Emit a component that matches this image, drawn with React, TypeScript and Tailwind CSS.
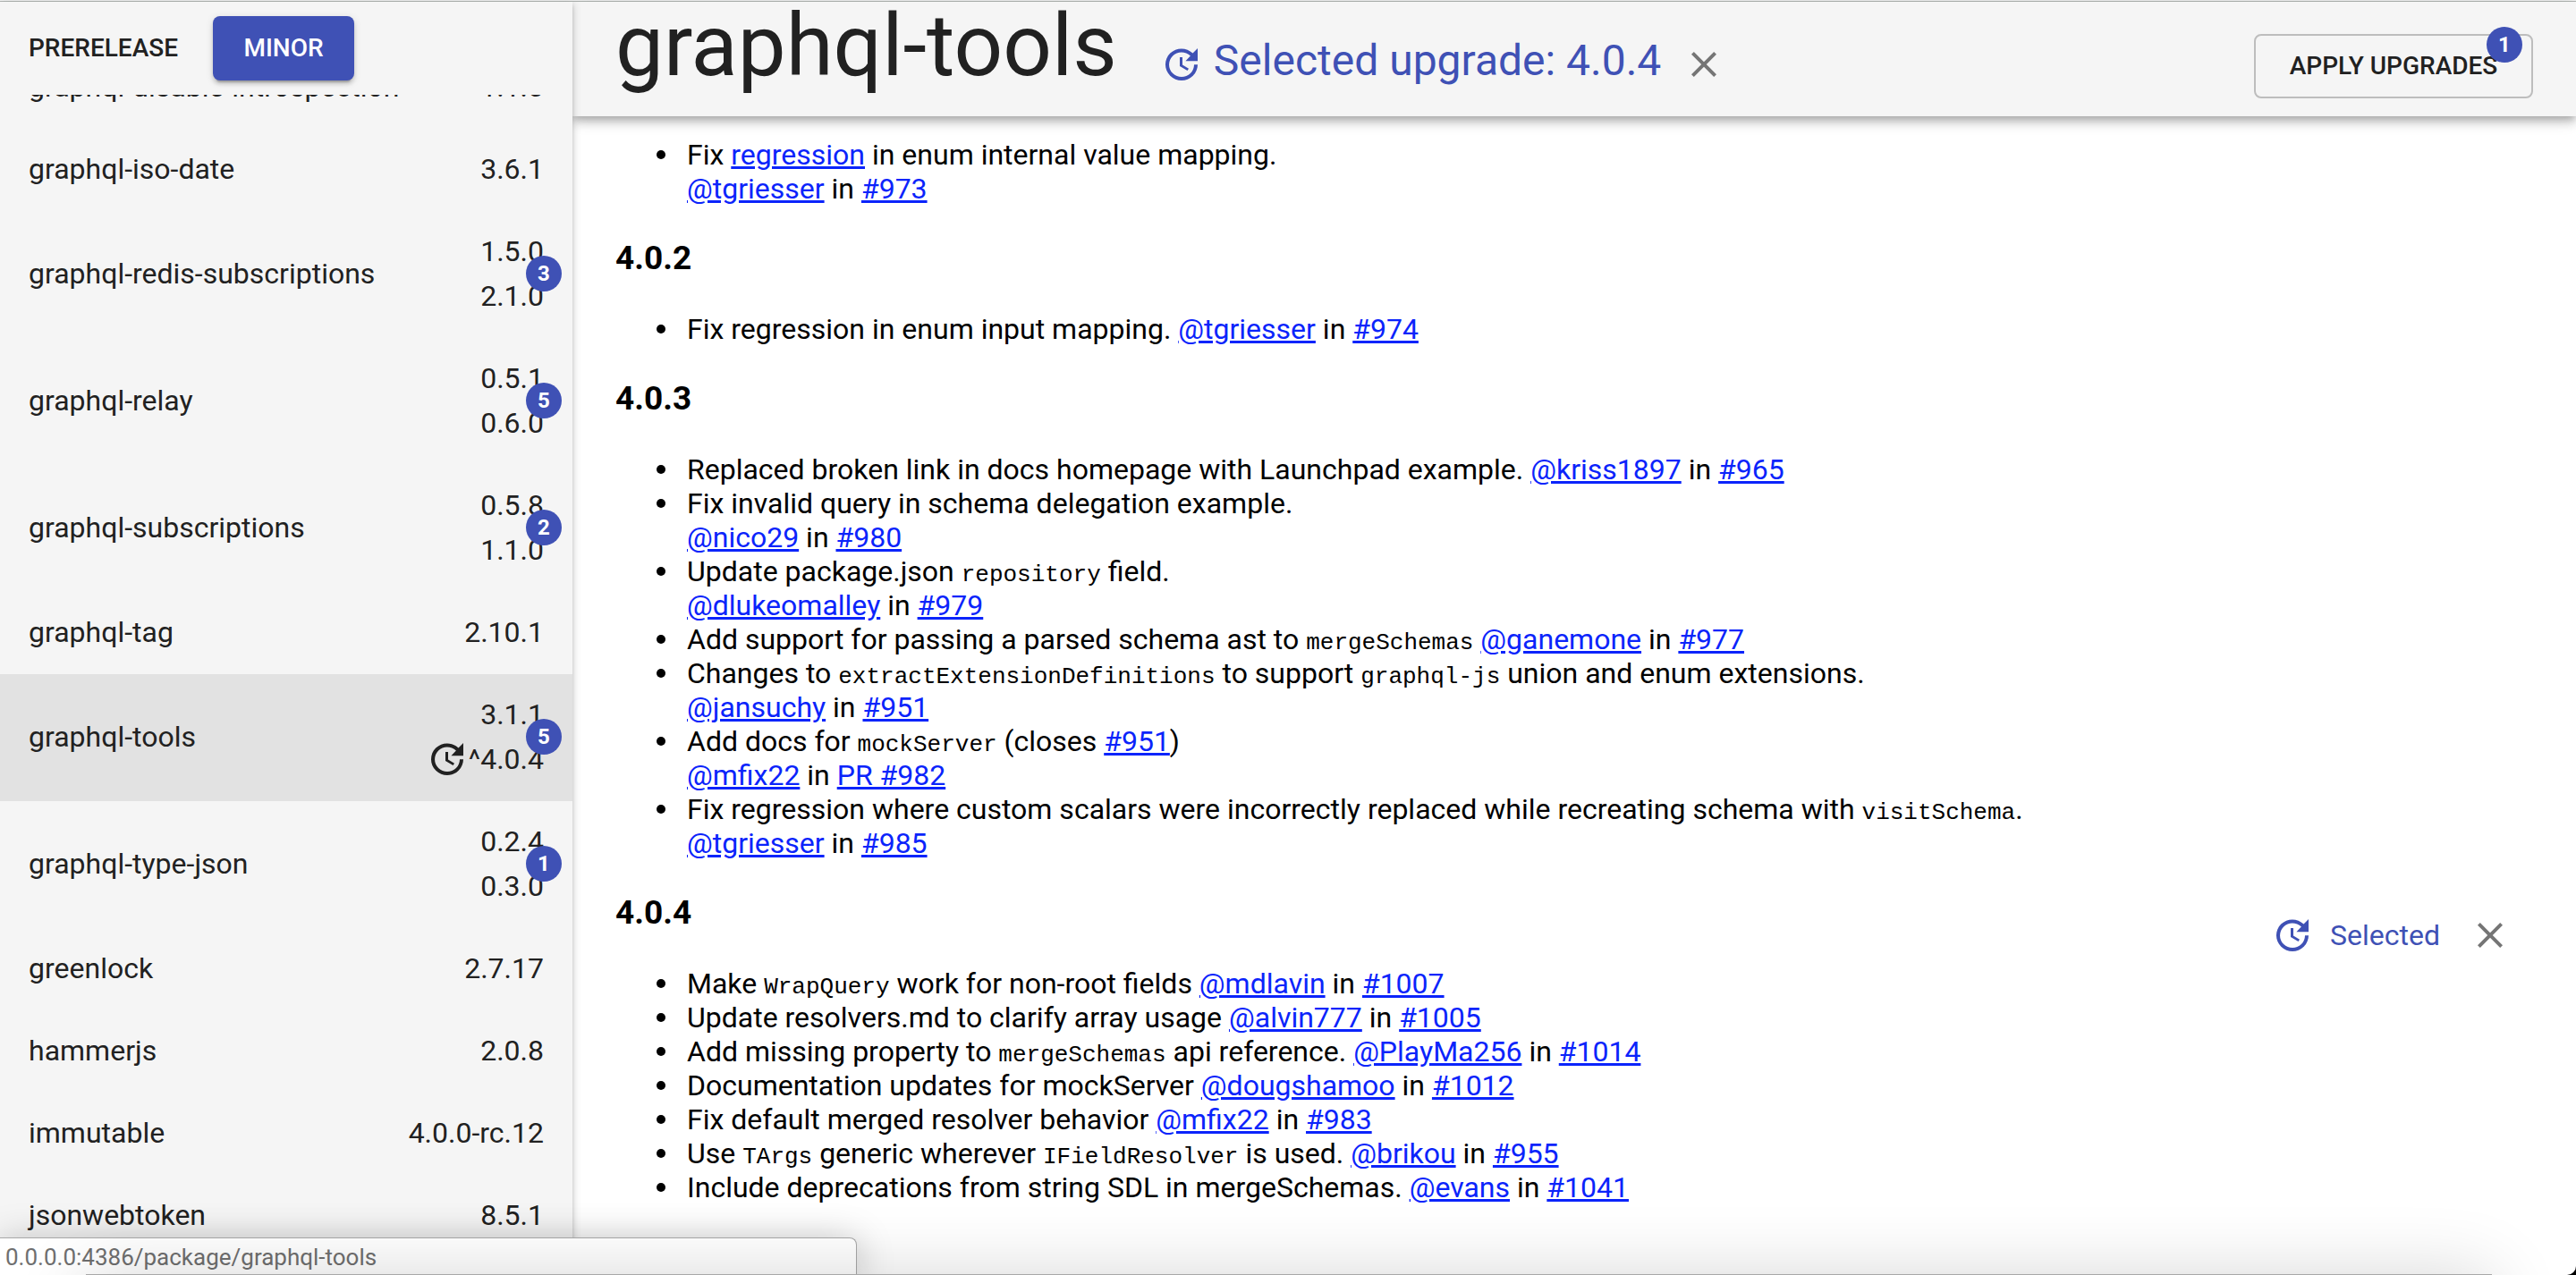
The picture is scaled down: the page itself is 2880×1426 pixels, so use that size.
import { useState } from "react";
import type { ReactNode } from "react";

type Pkg = {
  name: string;
  current: string;
  latest?: string;
  count?: number;
  selected?: boolean;
};

const packages: Pkg[] = [
  { name: "graphql-disable-introspection", current: "1.1.0" },
  { name: "graphql-iso-date", current: "3.6.1" },
  { name: "graphql-redis-subscriptions", current: "1.5.0", latest: "2.1.0", count: 3 },
  { name: "graphql-relay", current: "0.5.1", latest: "0.6.0", count: 5 },
  { name: "graphql-subscriptions", current: "0.5.8", latest: "1.1.0", count: 2 },
  { name: "graphql-tag", current: "2.10.1" },
  { name: "graphql-tools", current: "3.1.1", latest: "^4.0.4", count: 5, selected: true },
  { name: "graphql-type-json", current: "0.2.4", latest: "0.3.0", count: 1 },
  { name: "greenlock", current: "2.7.17" },
  { name: "hammerjs", current: "2.0.8" },
  { name: "immutable", current: "4.0.0-rc.12" },
  { name: "jsonwebtoken", current: "8.5.1" },
];

function UpdateIcon() {
  return (
    <svg viewBox="0 0 24 24" className="size-12 shrink-0 fill-current" aria-hidden="true">
      <path d="M21 10.12h-6.78l2.74-2.82c-2.73-2.7-7.15-2.8-9.88-.1-2.73 2.71-2.73 7.08 0 9.79 2.73 2.71 7.15 2.71 9.88 0C18.32 15.65 19 14.08 19 12.1h2c0 1.98-.88 4.55-2.64 6.29-3.51 3.48-9.21 3.48-12.72 0-3.5-3.47-3.53-9.11-.02-12.58 3.51-3.47 9.14-3.47 12.65 0L21 3v7.12zM12.5 8v4.25l3.5 2.08-.72 1.21L11 13V8h1.5z" />
    </svg>
  );
}

function CloseButton({ label }: { label: string }) {
  return (
    <button type="button" aria-label={label} className="rounded-full p-6 text-[#757575]">
      <svg viewBox="0 0 24 24" className="size-12 fill-current" aria-hidden="true">
        <path d="M19 6.41L17.59 5 12 10.59 6.41 5 5 6.41 10.59 12 5 17.59 6.41 19 12 13.41 17.59 19 19 17.59 13.41 12z" />
      </svg>
    </button>
  );
}

function Badge({ children }: { children: ReactNode }) {
  return (
    <span className="absolute flex size-10 items-center justify-center rounded-full bg-[#3f51b5] text-2xl font-bold text-white">
      {children}
    </span>
  );
}

function PackageRow({ pkg }: { pkg: Pkg }) {
  return (
    <li>
      <a
        href={"#" + pkg.name}
        aria-current={pkg.selected ? "page" : undefined}
        className={
          "flex items-center justify-between px-8 pt-5 pb-[22px] text-[32px] leading-[50px] " +
          (pkg.selected ? "bg-[#e2e2e2]" : "")
        }
      >
        <span>{pkg.name}</span>
        <span className="relative flex flex-col items-end">
          <span>{pkg.current}</span>
          {pkg.latest && (
            <span className="flex items-center">
              {pkg.selected && <UpdateIcon />}
              {pkg.latest}
            </span>
          )}
          {pkg.count && (
            <span className="absolute top-1/2 right-0 flex items-center justify-center">
              <Badge>{pkg.count}</Badge>
            </span>
          )}
        </span>
      </a>
    </li>
  );
}

function A({ children }: { children: ReactNode }) {
  return (
    <a href="#changelog" className="text-[#0b24fb] underline">
      {children}
    </a>
  );
}

function Code({ children }: { children: ReactNode }) {
  return <code className="font-['Liberation_Mono',monospace] text-[26px] leading-none">{children}</code>;
}

function Notes({ children }: { children: ReactNode }) {
  return <ul className="pl-20 text-[32px] leading-[38px]">{children}</ul>;
}

function Note({ children }: { children: ReactNode }) {
  return (
    <li className="relative before:absolute before:top-3.5 before:-left-[34px] before:size-2.5 before:rounded-full before:bg-black">
      {children}
    </li>
  );
}

function Release({ version, children }: { version: string; children: ReactNode }) {
  return (
    <section className="mt-[37px] grow">
      <h3 className="mb-[38px] text-[37px] leading-[44px] font-bold">{version}</h3>
      <Notes>{children}</Notes>
    </section>
  );
}

export default function App() {
  const [channel, setChannel] = useState("minor");
  const active =
    "bg-[#3f51b5] text-white shadow-[0_6px_2px_-4px_rgba(0,0,0,0.2),0_4px_4px_rgba(0,0,0,0.14),0_2px_10px_rgba(0,0,0,0.12)]";

  return (
    <div className="bg-black">
      <div className="relative flex h-screen flex-col overflow-hidden rounded-br-[10px] bg-white font-[Roboto,sans-serif] text-[#212121]">
        <div className="h-0.5 shrink-0 border-b border-[#b3b8b5] bg-[#f5f5f5]" />
        <div className="flex min-h-0 grow">
          <aside className="z-20 flex w-[640px] shrink-0 flex-col bg-[#f5f5f5] shadow-[0_2px_10px_rgba(0,0,0,0.2),0_4px_4px_rgba(0,0,0,0.14)]">
            <div className="flex py-4 text-[28px] leading-[48px] font-medium">
              <button
                type="button"
                onClick={() => setChannel("prerelease")}
                className={"w-[238px] rounded-lg px-8 py-3 text-left " + (channel === "prerelease" ? active : "")}
              >
                PRERELEASE
              </button>
              <button
                type="button"
                onClick={() => setChannel("minor")}
                className={"w-[158px] rounded-lg py-3 " + (channel === "minor" ? active : "")}
              >
                MINOR
              </button>
            </div>
            <nav className="min-h-0 grow overflow-hidden">
              <ul className="-mt-[54px]">
                {packages.map((pkg) => (
                  <PackageRow key={pkg.name} pkg={pkg} />
                ))}
              </ul>
            </nav>
          </aside>

          <main className="flex min-w-0 grow flex-col">
            <header className="z-10 flex h-32 shrink-0 items-start justify-between bg-[#f5f5f5] px-12 shadow-[0_4px_8px_-2px_rgba(0,0,0,0.2),0_8px_10px_rgba(0,0,0,0.14),0_2px_20px_rgba(0,0,0,0.12)]">
              <div className="flex items-start">
                <h1 className="text-8xl leading-[98px]">graphql-tools</h1>
                <div className="mt-[22px] ml-12 flex items-center">
                  <div className="flex items-center gap-3 text-5xl text-[#3f51b5]">
                    <UpdateIcon />
                    <span className="pb-2">Selected upgrade: 4.0.4</span>
                  </div>
                  <CloseButton label="Clear selected upgrade" />
                </div>
              </div>
              <button
                type="button"
                className="mt-9 w-[312px] rounded-lg border-2 border-[#bdbdbd] px-[30px] py-2.5 text-[28px] leading-[48px] font-medium"
              >
                <span className="relative block">
                  APPLY UPGRADES
                  <span className="absolute top-0 right-0 flex items-center justify-center">
                    <Badge>1</Badge>
                  </span>
                </span>
              </button>
            </header>

            <div id="changelog" className="min-h-0 grow overflow-hidden px-12 pt-6 text-black">
              <Notes>
                <Note>
                  Fix <A>regression</A> in enum internal value mapping.
                  <br />
                  <A>@tgriesser</A> in <A>#973</A>
                </Note>
              </Notes>
              <Release version="4.0.2">
                <Note>
                  Fix regression in enum input mapping. <A>@tgriesser</A> in <A>#974</A>
                </Note>
              </Release>
              <Release version="4.0.3">
                <Note>
                  Replaced broken link in docs homepage with Launchpad example. <A>@kriss1897</A> in <A>#965</A>
                </Note>
                <Note>
                  Fix invalid query in schema delegation example.
                  <br />
                  <A>@nico29</A> in <A>#980</A>
                </Note>
                <Note>
                  Update package.json <Code>repository</Code> field.
                  <br />
                  <A>@dlukeomalley</A> in <A>#979</A>
                </Note>
                <Note>
                  Add support for passing a parsed schema ast to <Code>mergeSchemas</Code> <A>@ganemone</A> in{" "}
                  <A>#977</A>
                </Note>
                <Note>
                  Changes to <Code>extractExtensionDefinitions</Code> to support <Code>graphql-js</Code> union and enum
                  extensions.
                  <br />
                  <A>@jansuchy</A> in <A>#951</A>
                </Note>
                <Note>
                  Add docs for <Code>mockServer</Code> (closes <A>#951</A>)
                  <br />
                  <A>@mfix22</A> in <A>PR #982</A>
                </Note>
                <Note>
                  Fix regression where custom scalars were incorrectly replaced while recreating schema with{" "}
                  <Code>visitSchema</Code>.
                  <br />
                  <A>@tgriesser</A> in <A>#985</A>
                </Note>
              </Release>
              <div className="flex items-start justify-between">
                <Release version="4.0.4">
                  <Note>
                    Make <Code>WrapQuery</Code> work for non-root fields <A>@mdlavin</A> in <A>#1007</A>
                  </Note>
                  <Note>
                    Update resolvers.md to clarify array usage <A>@alvin777</A> in <A>#1005</A>
                  </Note>
                  <Note>
                    Add missing property to <Code>mergeSchemas</Code> api reference. <A>@PlayMa256</A> in{" "}
                    <A>#1014</A>
                  </Note>
                  <Note>
                    Documentation updates for mockServer <A>@dougshamoo</A> in <A>#1012</A>
                  </Note>
                  <Note>
                    Fix default merged resolver behavior <A>@mfix22</A> in <A>#983</A>
                  </Note>
                  <Note>
                    Use <Code>TArgs</Code> generic wherever <Code>IFieldResolver</Code> is used. <A>@brikou</A> in{" "}
                    <A>#955</A>
                  </Note>
                  <Note>
                    Include deprecations from string SDL in mergeSchemas. <A>@evans</A> in <A>#1041</A>
                  </Note>
                </Release>
                <div className="mt-9 flex shrink-0 items-center text-[32px] text-[#3f51b5]">
                  <UpdateIcon />
                  <span className="mr-2 ml-[18px]">Selected</span>
                  <CloseButton label="Deselect 4.0.4" />
                </div>
              </div>
            </div>
          </main>
        </div>

        <div className="absolute bottom-0 left-0 z-30 h-[42px] w-1/3 max-w-[958px] rounded-tr-lg border-t border-r border-[#a8a8a8] bg-white px-1.5 text-[26px] leading-[42px] text-[#6f6f6f] shadow-[0_4px_40px_rgba(0,0,0,0.25)]">
          0.0.0.0:4386/package/graphql-tools
        </div>
        <div className="pointer-events-none absolute right-[94px] -bottom-[159px] left-24 z-40 h-40 border-t border-[#a8a8a8] shadow-[0_0_80px_rgba(0,0,0,0.16)]" />
      </div>
    </div>
  );
}
